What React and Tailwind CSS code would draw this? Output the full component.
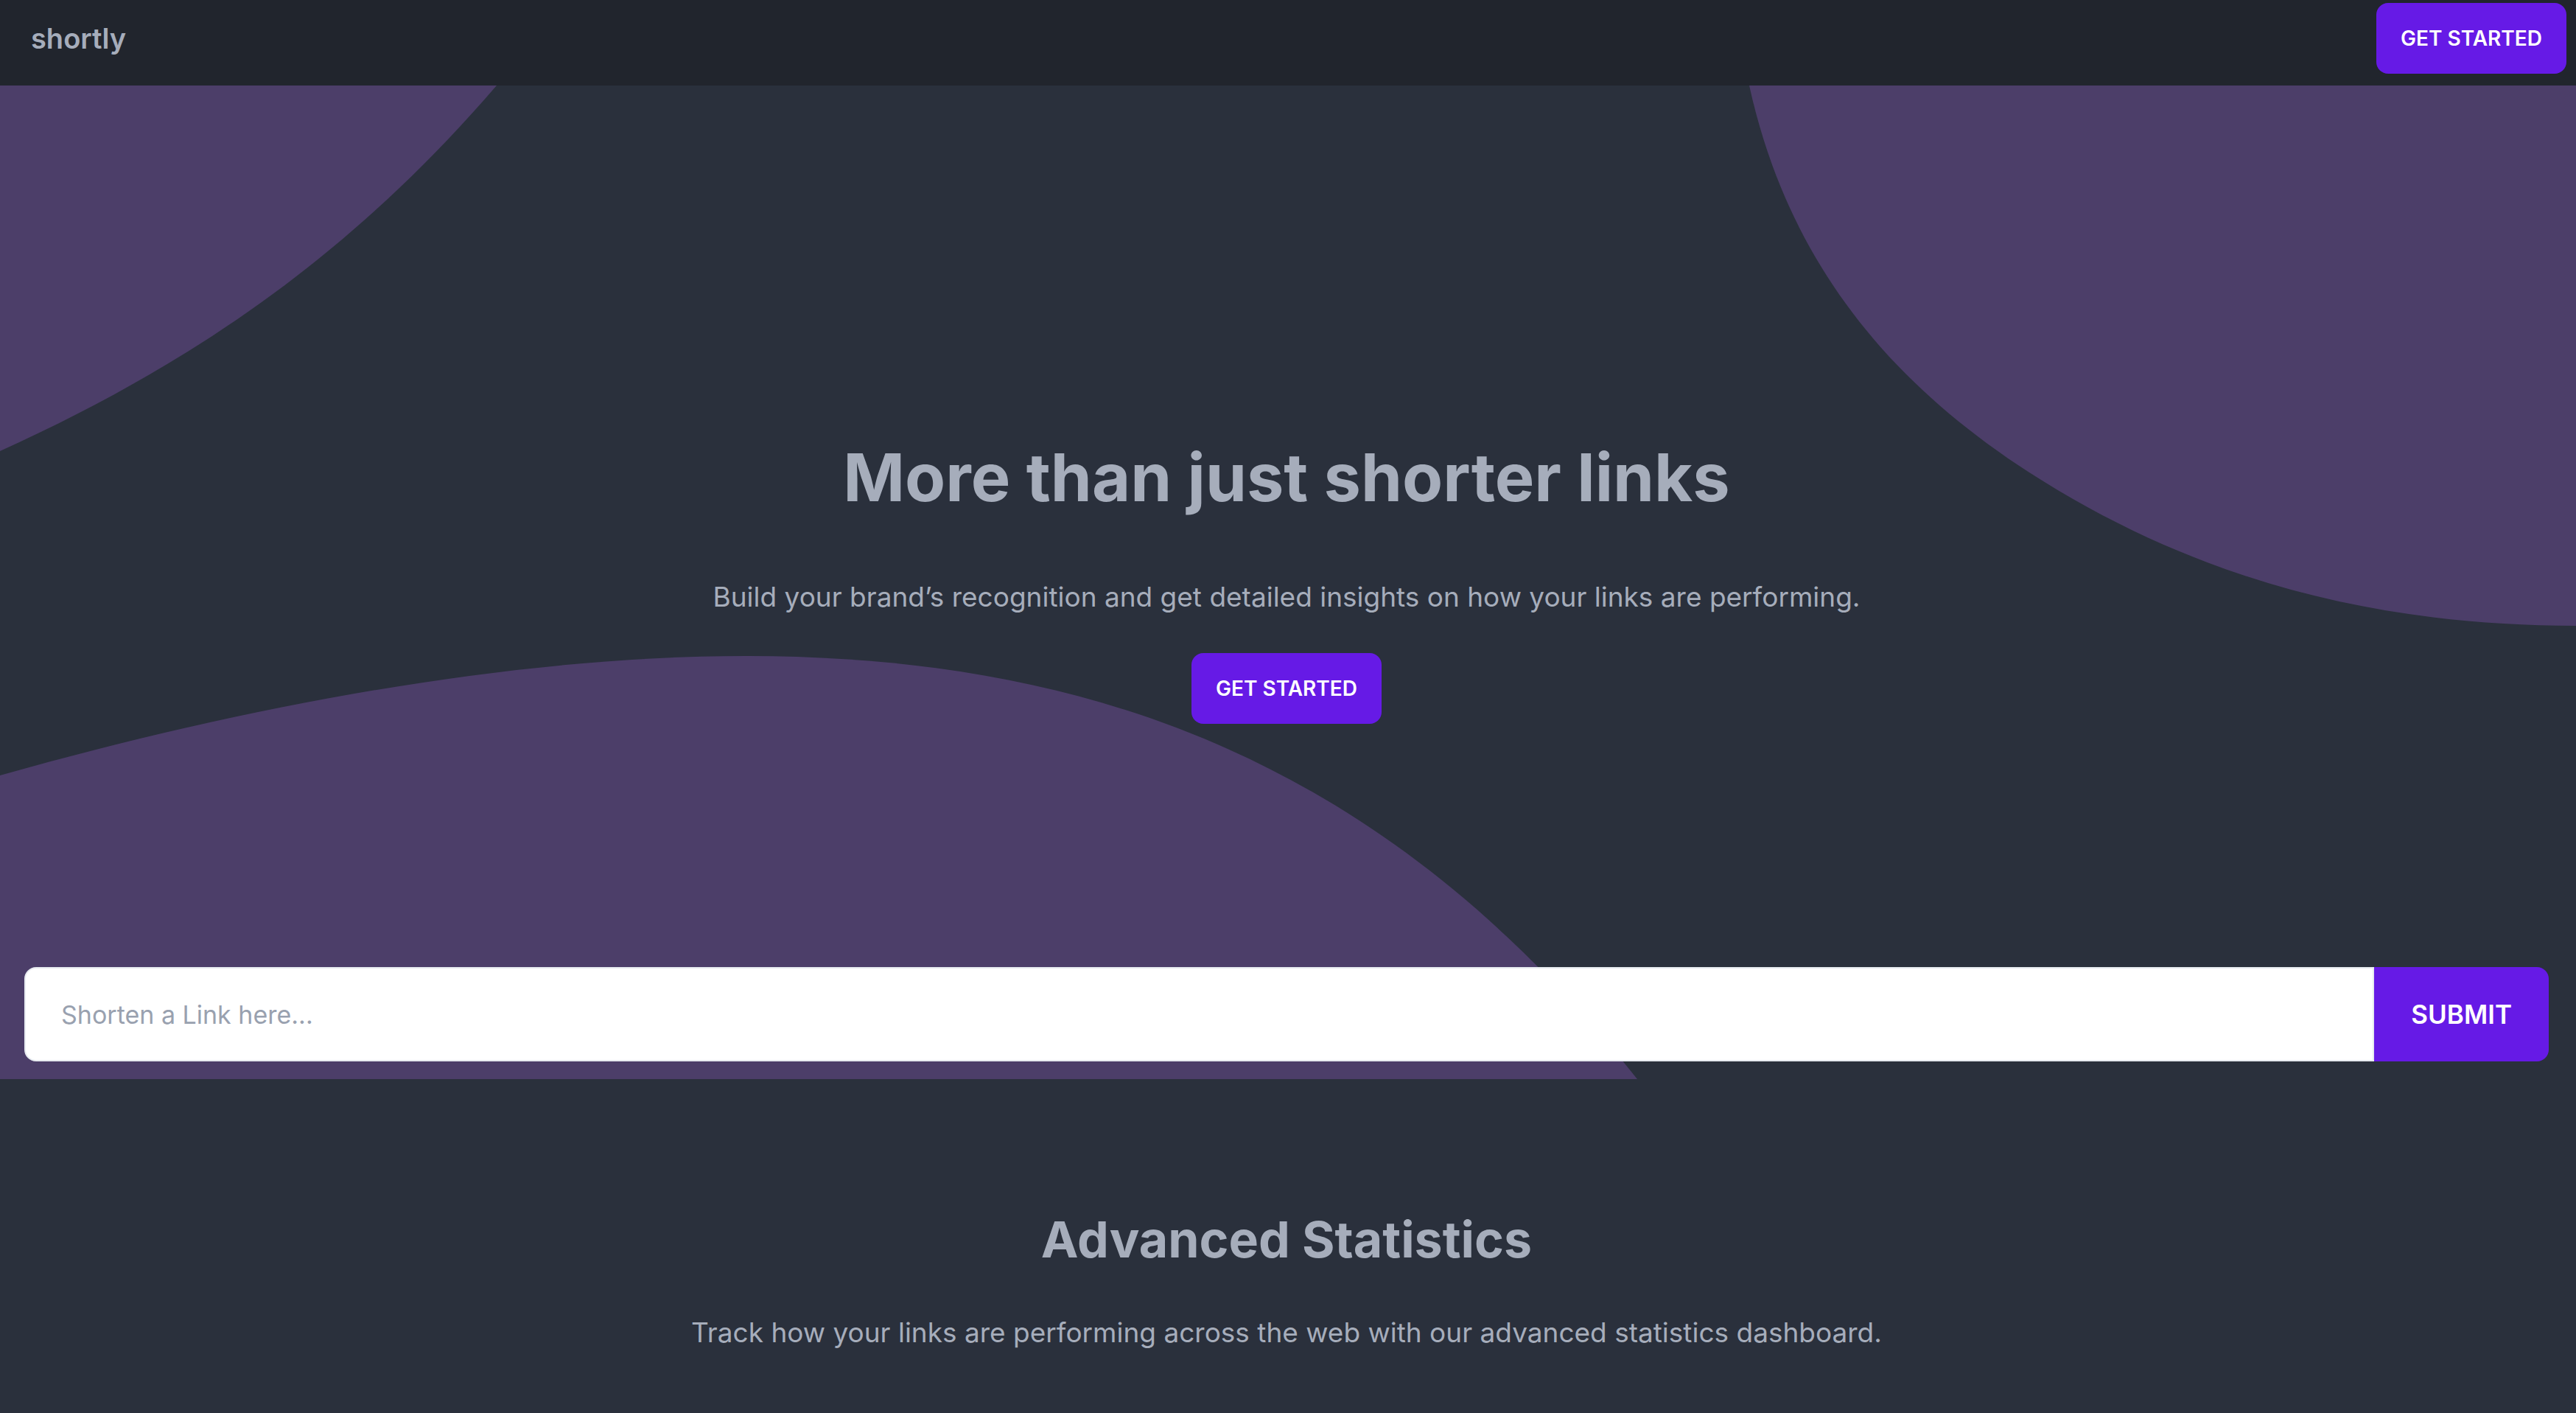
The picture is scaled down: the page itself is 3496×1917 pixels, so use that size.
function PrimaryButton({ children }) {
  return (
    <button
      type="button"
      className="flex h-24 items-center rounded-2xl bg-[#661ae6] px-[33px] text-[28px] leading-8 font-semibold text-white uppercase"
    >
      {children}
    </button>
  );
}

function Header() {
  return (
    <header className="flex items-center justify-between bg-[#21252d] pt-1 pr-[13px] pb-4 pl-[42px]">
      <a href="#home" className="text-[38px] leading-[56px] font-semibold">
        shortly
      </a>
      <PrimaryButton>Get Started</PrimaryButton>
    </header>
  );
}

function HeroBlobs() {
  return (
    <svg
      aria-hidden="true"
      viewBox="0 0 3496 1348"
      preserveAspectRatio="xMidYMid slice"
      className="absolute inset-0 size-full"
      fill="#4c3e69"
    >
      <path d="M0 0H674C480 225 269 374 0 496Z" />
      <path d="M2374 0C2432 264 2595 441 2833 572C3033 682 3250 733 3496 733V0Z" />
      <path d="M0 936C340 840 700 774 1012 774C1500 774 1890 930 2222 1348H0Z" />
    </svg>
  );
}

function ShortenForm() {
  return (
    <form className="flex px-[33px] pb-6" onSubmit={(e) => e.preventDefault()}>
      <input
        type="text"
        aria-label="Link to shorten"
        placeholder="Shorten a Link here..."
        className="h-32 min-w-0 flex-1 rounded-l-2xl border-2 border-[#e7ebf0] bg-white px-12 text-[34px] leading-[56px] text-gray-800 placeholder:text-gray-400"
      />
      <button
        type="submit"
        className="h-32 rounded-r-2xl bg-[#661ae6] px-[50px] text-[35px] leading-[56px] font-semibold text-white uppercase"
      >
        Submit
      </button>
    </form>
  );
}

export default function App() {
  return (
    <div className="min-h-screen bg-[#2a303c] font-['Inter',sans-serif] text-[#a6adbb]">
      <Header />
      <main>
        <section className="relative">
          <HeroBlobs />
          <div className="relative pr-1">
            <div className="flex flex-col items-center pt-[484px] pb-[330px] text-center">
              <h1 className="text-[90px] leading-[96px] font-bold">More than just shorter links</h1>
              <p className="mt-[86px] mb-12 text-[37px] leading-[56px]">
                Build your brand’s recognition and get detailed insights on how your links are performing.
              </p>
              <PrimaryButton>Get Started</PrimaryButton>
            </div>
            <ShortenForm />
          </div>
        </section>
        <section className="flex flex-col items-center pt-[177px] pr-1 text-center">
          <h2 className="text-[68px] leading-[80px] font-bold">Advanced Statistics</h2>
          <p className="mt-[59px] text-[37px] leading-[56px]">
            Track how your links are performing across the web with our advanced statistics dashboard.
          </p>
        </section>
      </main>
    </div>
  );
}
